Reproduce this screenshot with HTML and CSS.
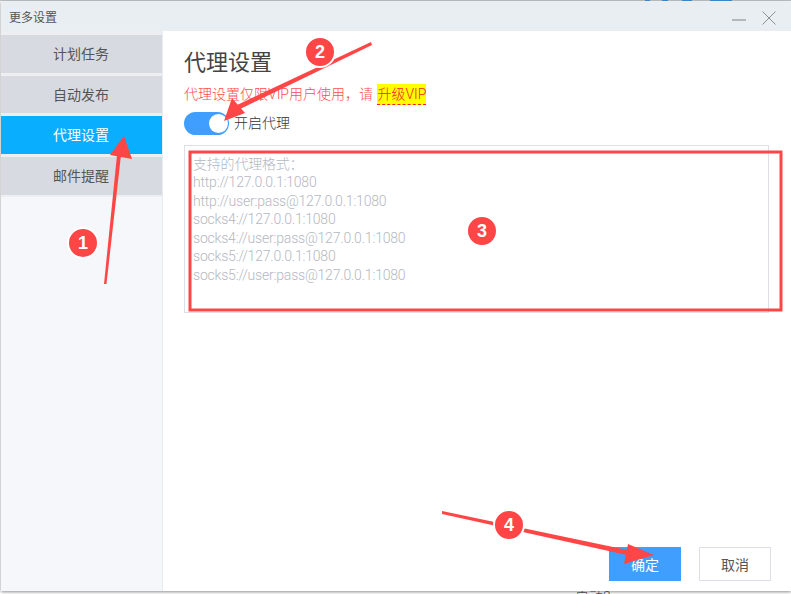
FILE: index.html
```html
<!DOCTYPE html>
<html lang="zh-CN">
<head>
  <meta charset="UTF-8">
  <meta name="viewport" content="width=device-width, initial-scale=1.0">
  <title>更多设置</title>
  <link rel="stylesheet" href="styles.css">
</head>
<body>
  <div class="behind-top"></div>
  <div class="window">
    <div class="title-bar">
      <span class="title-text">更多设置</span>
      <div class="window-controls">
        <svg class="minimize" width="14" height="4" viewBox="0 0 14 4"><rect y="1" width="14" height="2" fill="#b4b8bc"/></svg>
        <svg width="14" height="14" viewBox="0 0 14 14"><path d="M0.5 0.5L13.5 13.5M13.5 0.5L0.5 13.5" stroke="#8c9094" stroke-width="1" fill="none"/></svg>
      </div>
    </div>
    <div class="window-body">
      <div class="sidebar">
        <div class="menu">
          <div class="menu-item">计划任务</div>
          <div class="menu-item">自动发布</div>
          <div class="menu-item active">代理设置</div>
          <div class="menu-item">邮件提醒</div>
        </div>
      </div>
      <div class="content">
        <h1 class="heading">代理设置</h1>
        <div class="notice">代理设置仅限VIP用户使用，请 <span class="upgrade">升级VIP</span></div>
        <div class="proxy-switch">
          <span class="toggle"><span class="knob"></span></span>
          <span class="switch-label">开启代理</span>
        </div>
        <textarea class="proxy-input" placeholder="支持的代理格式：
http://127.0.0.1:1080
http://user:pass@127.0.0.1:1080
socks4://127.0.0.1:1080
socks4://user:pass@127.0.0.1:1080
socks5://127.0.0.1:1080
socks5://user:pass@127.0.0.1:1080"></textarea>
        <div class="actions">
          <button class="btn primary">确定</button>
          <button class="btn">取消</button>
        </div>
      </div>
    </div>
  </div>
  <div class="behind-text">启动2</div>

  <!-- red annotations drawn over the screenshot -->
  <svg class="marks" width="791" height="594" viewBox="0 0 791 594">
    <g fill="#ff4646" stroke="none">
      <polygon points="104,284 106.5,284 121,155 117,155"/>
      <polygon points="124,136 110,155 132,159"/>
      <polygon points="371,42 372,45 238,110 235,106"/>
      <polygon points="224,121 245,113 232,98"/>
      <polygon points="442,511 442,514 636,557 637,552"/>
      <polygon points="654,555 628,544 624,564"/>
    </g>
    <rect x="190" y="152" width="591" height="158" fill="none" stroke="#ff4646" stroke-width="3"/>
    <g fill="#ff4646" stroke="#fff" stroke-width="2">
      <circle cx="83" cy="243" r="15"/>
      <circle cx="320" cy="52" r="15"/>
      <circle cx="482" cy="231" r="15"/>
      <circle cx="509" cy="525" r="15"/>
    </g>
    <g class="mark-num" text-anchor="middle">
      <text x="83" y="249">1</text>
      <text x="320" y="58">2</text>
      <text x="482" y="237">3</text>
      <text x="509" y="531">4</text>
    </g>
  </svg>
</body>
</html>
```

FILE: styles.css
```css
* {
  box-sizing: border-box;
}
html, body {
  margin: 0;
  height: 594px;
  overflow: hidden;
}
body {
  position: relative;
  background-color: #fff;
  font-family: Roboto, "Noto Sans CJK SC", sans-serif;
  font-weight: 300;
  color: #333;
  padding: 1px 0 0 1px;
}
.behind-top {
  position: absolute;
  left: 0;
  top: 0;
  width: 791px;
  height: 1px;
  background: linear-gradient(to right,
    #c4c6c8 645px, #3f8fd8 645px, #3f8fd8 650px,
    #c4c6c8 650px, #c4c6c8 662px, #3f8fd8 662px, #3f8fd8 668px,
    #c4c6c8 668px, #c4c6c8 682px, #3f8fd8 682px, #3f8fd8 692px,
    #c4c6c8 692px, #c4c6c8 710px, #3f8fd8 710px, #3f8fd8 732px,
    #c4c6c8 732px);
}
.window {
  width: 790px;
  height: 590px;
  display: flex;
  flex-direction: column;
  background-color: #fff;
  box-shadow: 0 1px 3px rgba(0, 0, 0, 0.45);
  position: relative;
  z-index: 1;
}
.title-bar {
  height: 30px;
  flex: none;
  display: flex;
  align-items: center;
  justify-content: space-between;
  padding: 1px 15px 0 8px;
  background-color: #e9eef2;
}
.title-text {
  font-size: 12px;
  font-weight: 400;
  color: #555;
}
.window-controls {
  display: flex;
  align-items: center;
  gap: 16px;
  margin-top: 2px;
}
.minimize {
  margin-top: 5px;
}
.window-body {
  flex: 1;
  display: flex;
}
.sidebar {
  width: 162px;
  flex: none;
  background-color: #f5f7fb;
  border-right: 1px solid #e6ebef;
}
.menu {
  padding: 4px 0 2px;
  background-color: #eceef1;
  display: flex;
  flex-direction: column;
  gap: 3px;
}
.menu-item {
  height: 37.7px;
  display: flex;
  align-items: center;
  justify-content: center;
  padding: 0 1px 2px 0;
  font-size: 14px;
  font-weight: 400;
  color: #555;
  background-color: #d7dbe1;
}
.menu-item.active {
  color: #fff;
  background-color: #0aaeff;
}
.content {
  flex: 1;
  display: flex;
  flex-direction: column;
  padding: 17px 20px 10px 21px;
}
.heading {
  margin: 0;
  font-size: 22px;
  font-weight: 400;
  line-height: 30px;
  color: #444;
}
.notice {
  margin-top: 6px;
  font-size: 14px;
  line-height: 20px;
  color: #ff4d4f;
}
.upgrade {
  display: inline-block;
  margin-left: 1px;
  background-color: #ff0;
  color: #f5222d;
  border-bottom: 1px dashed #f5222d;
}
.proxy-switch {
  display: flex;
  align-items: center;
  gap: 5px;
  margin-top: 7px;
  font-size: 14px;
  color: #333;
}
.switch-label {
  padding-bottom: 3px;
}
.toggle {
  width: 45px;
  height: 23px;
  border-radius: 12px;
  background-color: #409eff;
  display: flex;
  align-items: center;
  justify-content: flex-end;
  padding-right: 1px;
}
.knob {
  width: 19px;
  height: 19px;
  border-radius: 50%;
  background-color: #fff;
}
.proxy-input {
  display: block;
  width: 585px;
  height: 168px;
  margin-top: 10px;
  padding: 8.5px 8px;
  border: 1px solid #dcdfe6;
  outline: none;
  resize: none;
  font-family: inherit;
  font-weight: 300;
  font-size: 14px;
  line-height: 18.6px;
  letter-spacing: -0.2px;
}
.proxy-input::placeholder {
  color: #b4b8c2;
  opacity: 1;
}
.actions {
  margin-top: auto;
  display: flex;
  justify-content: flex-end;
  gap: 18px;
}
.btn {
  width: 72px;
  height: 34px;
  padding: 0 0 1px;
  font-family: inherit;
  font-weight: 400;
  font-size: 14px;
  color: #555;
  background-color: #fff;
  border: 1px solid #dcdfe6;
}
.btn.primary {
  color: #fff;
  background-color: #409eff;
  border-color: #409eff;
}
.behind-text {
  position: absolute;
  left: 575px;
  top: 586px;
  font-size: 14px;
  color: #555;
}
.marks {
  position: absolute;
  left: 0;
  top: 0;
  z-index: 2;
}
.mark-num {
  font-family: "Liberation Sans", sans-serif;
  font-size: 18px;
  font-weight: 700;
  fill: #fff;
}
```
